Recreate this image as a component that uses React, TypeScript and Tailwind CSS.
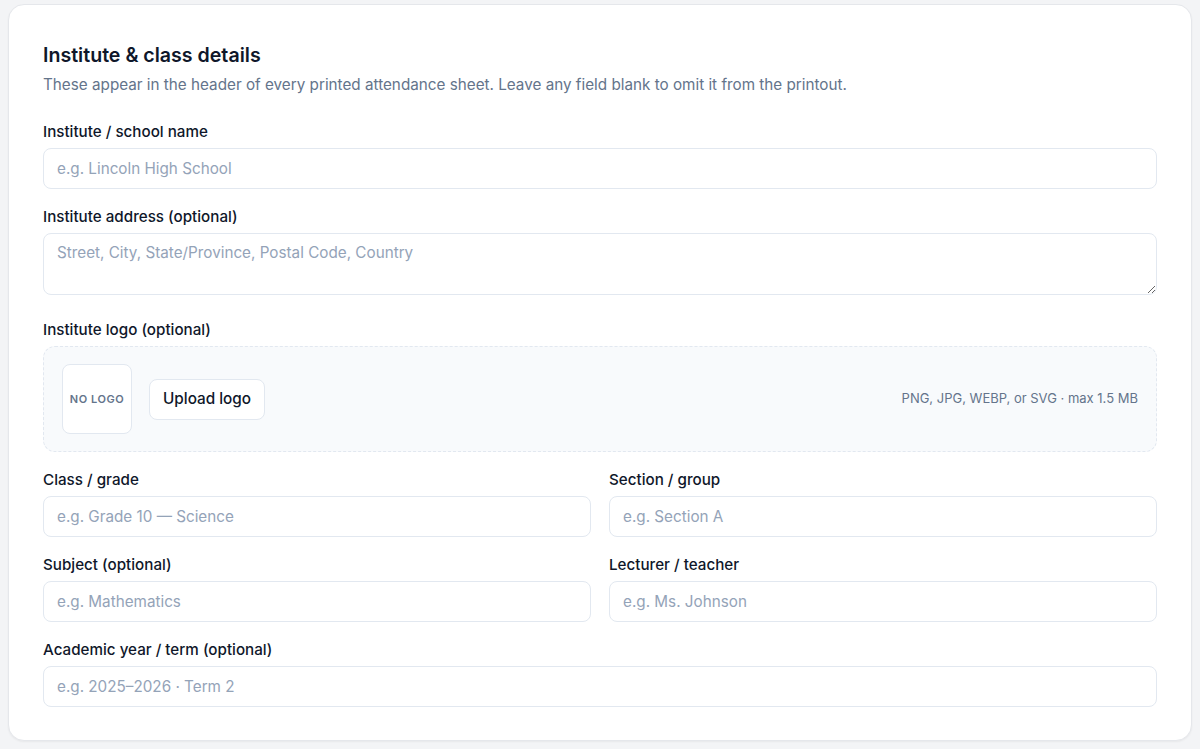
import React from "react";

const inputCls =
  "block w-full h-[41px] rounded-[8px] border border-[#e2e8f0] bg-white px-[13px] text-[15.25px] text-[#0f172a] placeholder:text-[#94a3b8] outline-none";

const labelCls = "text-[15.2px] leading-[20px] font-medium text-[#0f172a]";

function Field({ label, placeholder }: { label: string; placeholder: string }) {
  return (
    <div className="flex flex-col gap-[6px]">
      <label className={labelCls}>{label}</label>
      <input className={inputCls} placeholder={placeholder} />
    </div>
  );
}

export default function App() {
  return (
    <div
      className="min-h-[749px] bg-[#f3f4f6] px-[8px] pt-[4px] pb-[7px]"
      style={{ fontFamily: "Inter, 'Noto Sans', sans-serif" }}
    >
      <div className="rounded-[16px] border border-[#e5e7eb] bg-white px-[34px] pt-[36px] pb-[33px] shadow-[0_1px_2px_rgba(0,0,0,0.05)]">
        <h2 className="text-[19.6px] leading-[28px] font-semibold text-[#0f172a]">Institute &amp; class details</h2>
        <p className="mt-[6px] text-[15.25px] leading-[20px] text-[#64748b]">
          These appear in the header of every printed attendance sheet. Leave any field blank to omit it from the printout.
        </p>

        <div className="mt-[27px] flex flex-col gap-[18px]">
          <Field label="Institute / school name" placeholder="e.g. Lincoln High School" />

          <div className="flex flex-col gap-[6px]">
            <label className={labelCls}>Institute address (optional)</label>
            <textarea
              className="mb-[7px] w-full h-[62px] rounded-[8px] border border-[#e2e8f0] bg-white px-[13px] py-[9px] text-[15.25px] leading-[20px] text-[#0f172a] placeholder:text-[#94a3b8] outline-none resize-y"
              placeholder="Street, City, State/Province, Postal Code, Country"
            />
          </div>

          <div className="flex flex-col gap-[6px]">
            <label className={labelCls}>Institute logo (optional)</label>
            <div className="flex items-center rounded-[12px] border border-dashed border-[#e2e8f0] bg-[#f8fafc] px-[18px] py-[17px]">
              <div className="flex h-[70px] w-[70px] items-center justify-center rounded-[8px] border border-[#e2e8f0] bg-white text-[11px] font-semibold tracking-[0.05em] text-[#64748b]">
                NO LOGO
              </div>
              <button className="ml-[17px] h-[41px] rounded-[8px] border border-[#e2e8f0] bg-white px-[13px] text-[15.3px] font-medium text-[#0f172a]">
                Upload logo
              </button>
              <div className="ml-auto text-[13px] text-[#64748b]">PNG, JPG, WEBP, or SVG · max 1.5 MB</div>
            </div>
          </div>

          <div className="grid grid-cols-2 gap-x-[18px] gap-y-[18px]">
            <Field label="Class / grade" placeholder="e.g. Grade 10 — Science" />
            <Field label="Section / group" placeholder="e.g. Section A" />
            <Field label="Subject (optional)" placeholder="e.g. Mathematics" />
            <Field label="Lecturer / teacher" placeholder="e.g. Ms. Johnson" />
          </div>

          <Field label="Academic year / term (optional)" placeholder="e.g. 2025–2026 · Term 2" />
        </div>
      </div>
    </div>
  );
}
